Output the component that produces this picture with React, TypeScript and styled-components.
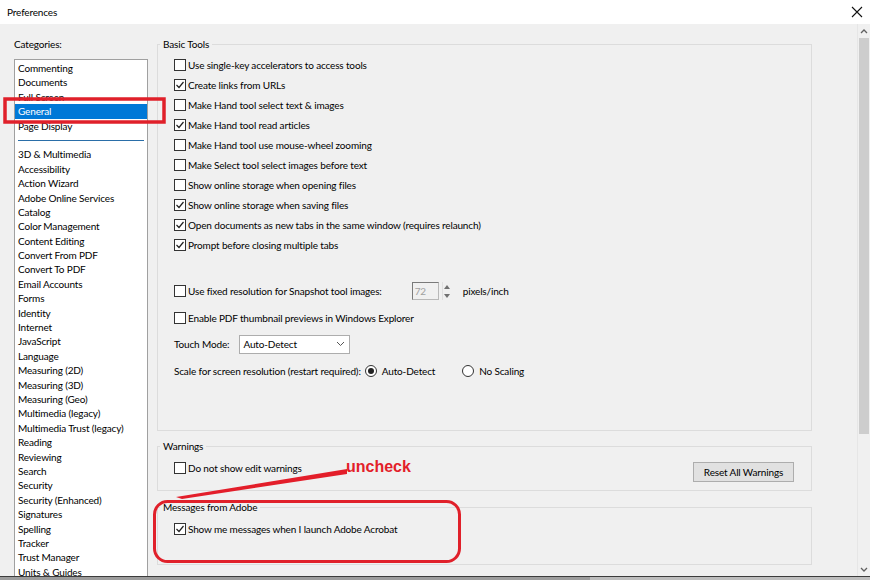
import React from "react";
import styled, { createGlobalStyle } from "styled-components";

const GlobalStyle = createGlobalStyle`
  html, body { margin: 0; padding: 0; background: #f0f0f0; }
  * { box-sizing: border-box; }
`;

const FONT = `"Segoe UI", Lato, "Noto Sans", sans-serif`;

const Window = styled.div`
  position: relative;
  width: 870px;
  height: 580px;
  overflow: hidden;
  display: flex;
  flex-direction: column;
  background: #f0f0f0;
  font-family: ${FONT};
  font-size: 10px;
  letter-spacing: -0.15px;
  color: #000;
`;

const TitleBar = styled.div`
  height: 24px;
  flex: none;
  background: #fff;
  display: flex;
  align-items: center;
  justify-content: space-between;
  padding: 0 7px 0 7px;
`;

const Title = styled.span`
  font-size: 10px;
`;

const Body = styled.div`
  flex: 1;
  display: flex;
  min-height: 0;
  overflow: hidden;
`;

const Sidebar = styled.div`
  width: 150px;
  flex: none;
  padding: 13px 0 0 14px;
  display: flex;
  flex-direction: column;
`;

const SideLabel = styled.div`
  line-height: 14px;
  height: 14px;
  margin-bottom: 8px;
`;

const ListBox = styled.div`
  width: 134px;
  flex: 1;
  background: #fff;
  border: 1px solid #a0a0a0;
  border-bottom: none;
  padding-top: 1px;
  overflow: hidden;
`;

const ListItem = styled.div<{ $selected?: boolean }>`
  height: 14.4px;
  line-height: 14.4px;
  padding-left: 3px;
  white-space: nowrap;
  background: ${({ $selected }) => ($selected ? "#0078d7" : "transparent")};
  color: ${({ $selected }) => ($selected ? "#fff" : "#000")};
`;

const ListSeparator = styled.div`
  height: 14.4px;
  display: flex;
  align-items: center;
  padding: 0 3px;
  &::after {
    content: "";
    flex: 1;
    height: 1px;
    background: #2a6ea8;
  }
`;

const Main = styled.div`
  flex: 1;
  padding: 14px 45px 0 7px;
  display: flex;
  flex-direction: column;
`;

const Group = styled.fieldset<{ $pt: number; $pb: number; $mt?: number }>`
  margin: ${({ $mt }) => $mt ?? 0}px 0 0 0;
  border: 1px solid #dcdcdc;
  padding: ${({ $pt }) => $pt}px 0 ${({ $pb }) => $pb}px 16px;
  min-width: 0;
`;

const Legend = styled.legend`
  margin-left: -14px;
  padding: 0 3px;
  line-height: 12px;
  font-size: 10px;
`;

const Row = styled.div<{ $gap?: number }>`
  height: 20px;
  display: flex;
  align-items: center;
  margin-top: ${({ $gap }) => $gap ?? 0}px;
  white-space: nowrap;
`;

const Box = styled.span`
  width: 12px;
  height: 12px;
  flex: none;
  border: 1px solid #333;
  background: #fff;
  margin-right: 2px;
  display: flex;
  align-items: center;
  justify-content: center;
`;

const Check = ({ on, label }: { on?: boolean; label: string }) => (
  <>
    <Box>
      {on && (
        <svg width="10" height="10" viewBox="0 0 10 10">
          <polyline points="1.5,5 4,7.5 8.5,2" fill="none" stroke="#222" strokeWidth="1.2" />
        </svg>
      )}
    </Box>
    <span>{label}</span>
  </>
);

const SpinWrap = styled.span`
  display: flex;
  align-items: center;
  margin-left: 30px;
`;

const SpinInput = styled.span`
  width: 27px;
  height: 18px;
  border: 1px solid #b8b8b8;
  border-top-color: #7a7a7a;
  border-left-color: #7a7a7a;
  color: #a0a0a0;
  padding-left: 2px;
  line-height: 16px;
`;

const SpinButtons = styled.span`
  width: 10px;
  height: 18px;
  margin-left: 3px;
  display: flex;
  flex-direction: column;
  justify-content: space-around;
  align-items: center;
  border-left: 1px solid #e0e0e0;
`;

const Unit = styled.span`
  margin-left: 11px;
`;

const Select = styled.span`
  width: 111px;
  height: 19px;
  margin-left: 10px;
  background: #fff;
  border: 1px solid #adadad;
  display: flex;
  align-items: center;
  justify-content: space-between;
  padding: 0 4px 0 3px;
`;

const Radio = styled.span<{ $on?: boolean }>`
  width: 12px;
  height: 12px;
  border-radius: 50%;
  border: 1px solid #333;
  background: #fff;
  margin-right: 5px;
  display: flex;
  align-items: center;
  justify-content: center;
  &::after {
    content: "";
    width: 6px;
    height: 6px;
    border-radius: 50%;
    background: ${({ $on }) => ($on ? "#222" : "transparent")};
  }
`;

const RadioItem = styled.span<{ $ml: number }>`
  display: flex;
  align-items: center;
  margin-left: ${({ $ml }) => $ml}px;
`;

const WarnRow = styled.div`
  display: flex;
  justify-content: space-between;
  align-items: flex-start;
  padding-right: 17px;
`;

const Button = styled.span`
  margin-top: 4px;
  width: 101px;
  height: 20px;
  background: #e1e1e1;
  border: 1px solid #adadad;
  display: flex;
  align-items: center;
  justify-content: center;
`;

const ScrollBar = styled.div`
  width: 13px;
  flex: none;
  display: flex;
  flex-direction: column;
  background: #f0f0f0;
  border-left: 1px solid #e6e6e6;
`;

const Arrow = styled.div`
  height: 14px;
  display: flex;
  align-items: center;
  justify-content: center;
`;

const Thumb = styled.div`
  height: 396px;
  margin: 0 1px;
  background: #cdcdcd;
`;

const Track = styled.div`
  flex: 1;
`;

const BottomStrip = styled.div`
  height: 4px;
  flex: none;
  border-top: 1px solid #3c3c3c;
  background: linear-gradient(90deg, #9c9c9c 0 590px, #bdbdbd 590px);
`;

const Annotations = styled.svg`
  position: absolute;
  left: 0;
  top: 0;
  pointer-events: none;
`;

const Callout = styled.span`
  position: absolute;
  left: 346px;
  top: 458px;
  font-family: "Liberation Sans", Arial, sans-serif;
  font-weight: bold;
  font-size: 16px;
  letter-spacing: 0;
  color: #e31e2a;
`;

const topItems = ["Commenting", "Documents", "Full Screen", "General", "Page Display"];
const moreItems = [
  "3D & Multimedia", "Accessibility", "Action Wizard", "Adobe Online Services", "Catalog",
  "Color Management", "Content Editing", "Convert From PDF", "Convert To PDF", "Email Accounts",
  "Forms", "Identity", "Internet", "JavaScript", "Language", "Measuring (2D)", "Measuring (3D)",
  "Measuring (Geo)", "Multimedia (legacy)", "Multimedia Trust (legacy)", "Reading", "Reviewing",
  "Search", "Security", "Security (Enhanced)", "Signatures", "Spelling", "Tracker",
  "Trust Manager", "Units & Guides",
];

const basicTools: [string, boolean][] = [
  ["Use single-key accelerators to access tools", false],
  ["Create links from URLs", true],
  ["Make Hand tool select text & images", false],
  ["Make Hand tool read articles", true],
  ["Make Hand tool use mouse-wheel zooming", false],
  ["Make Select tool select images before text", false],
  ["Show online storage when opening files", false],
  ["Show online storage when saving files", true],
  ["Open documents as new tabs in the same window (requires relaunch)", true],
  ["Prompt before closing multiple tabs", true],
];

export default function App() {
  return (
    <>
      <GlobalStyle />
      <Window>
        <TitleBar>
          <Title>Preferences</Title>
          <svg width="12" height="12" viewBox="0 0 12 12">
            <path d="M1 1L11 11M11 1L1 11" stroke="#111" strokeWidth="1.1" />
          </svg>
        </TitleBar>
        <Body>
          <Sidebar>
            <SideLabel>Categories:</SideLabel>
            <ListBox>
              {topItems.map((t) => (
                <ListItem key={t} $selected={t === "General"}>{t}</ListItem>
              ))}
              <ListSeparator />
              {moreItems.map((t) => (
                <ListItem key={t}>{t}</ListItem>
              ))}
            </ListBox>
          </Sidebar>
          <Main>
            <Group $pt={5} $pb={49}>
              <Legend>Basic Tools</Legend>
              {basicTools.map(([label, on]) => (
                <Row key={label}>
                  <Check on={on} label={label} />
                </Row>
              ))}
              <Row $gap={26}>
                <Check label="Use fixed resolution for Snapshot tool images:" />
                <SpinWrap>
                  <SpinInput>72</SpinInput>
                  <SpinButtons>
                    <svg width="6" height="4" viewBox="0 0 6 4"><path d="M0 4L3 0L6 4Z" fill="#707070" /></svg>
                    <svg width="6" height="4" viewBox="0 0 6 4"><path d="M0 0L3 4L6 0Z" fill="#707070" /></svg>
                  </SpinButtons>
                  <Unit>pixels/inch</Unit>
                </SpinWrap>
              </Row>
              <Row $gap={7}>
                <Check label="Enable PDF thumbnail previews in Windows Explorer" />
              </Row>
              <Row $gap={6}>
                <span>Touch Mode:</span>
                <Select>
                  <span>Auto-Detect</span>
                  <svg width="9" height="6" viewBox="0 0 9 6">
                    <polyline points="1,1 4.5,4.5 8,1" fill="none" stroke="#555" strokeWidth="1" />
                  </svg>
                </Select>
              </Row>
              <Row $gap={7}>
                <span>Scale for screen resolution (restart required):</span>
                <RadioItem $ml={4}>
                  <Radio $on />
                  <span>Auto-Detect</span>
                </RadioItem>
                <RadioItem $ml={27}>
                  <Radio />
                  <span>No Scaling</span>
                </RadioItem>
              </Row>
            </Group>
            <Group $pt={6} $pb={8} $mt={9}>
              <Legend>Warnings</Legend>
              <WarnRow>
                <Row>
                  <Check label="Do not show edit warnings" />
                </Row>
                <Button>Reset All Warnings</Button>
              </WarnRow>
            </Group>
            <Group $pt={6} $pb={25} $mt={10}>
              <Legend>Messages from Adobe</Legend>
              <Row>
                <Check on label="Show me messages when I launch Adobe Acrobat" />
              </Row>
            </Group>
          </Main>
          <ScrollBar>
            <Arrow>
              <svg width="8" height="5" viewBox="0 0 8 5"><polyline points="1,4 4,1 7,4" fill="none" stroke="#606060" strokeWidth="1.3" /></svg>
            </Arrow>
            <Thumb />
            <Track />
            <Arrow>
              <svg width="8" height="5" viewBox="0 0 8 5"><polyline points="1,1 4,4 7,1" fill="none" stroke="#606060" strokeWidth="1.3" /></svg>
            </Arrow>
          </ScrollBar>
        </Body>
        <BottomStrip />
        <Annotations width="870" height="580" viewBox="0 0 870 580">
          <rect x="5" y="99" width="159" height="23" fill="none" stroke="#e0202a" strokeWidth="3.5" />
          <polygon points="347,469 347,474 182,499 176,497" fill="#e31e2a" />
          <rect x="154.5" y="501.5" width="305" height="60" rx="13" fill="none" stroke="#e0202a" strokeWidth="3" />
        </Annotations>
        <Callout>uncheck</Callout>
      </Window>
    </>
  );
}
